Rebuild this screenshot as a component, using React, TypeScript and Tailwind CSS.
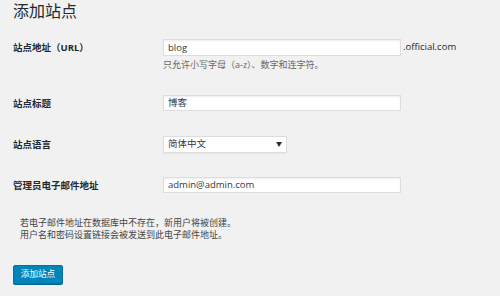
const font = { fontFamily: '"Open Sans", "Noto Sans CJK SC", sans-serif' };

function Label({ children }: { children: React.ReactNode }) {
  return (
    <div className="w-[150px] shrink-0 text-[9.5px] leading-[17px] font-bold text-[#23282d]">
      {children}
    </div>
  );
}

function TextInput({ value }: { value: string }) {
  return (
    <div className="w-[238px] h-[16px] bg-white border border-[#dddddd] shadow-[inset_0_1px_2px_rgba(0,0,0,0.07)] px-[4px] text-[9.5px] leading-[14px] text-[#32373c]">
      {value}
    </div>
  );
}

export default function App() {
  return (
    <div className="w-[500px] h-[296px] bg-[#f1f1f1] px-[13px] overflow-hidden" style={font}>
      <h1 className="text-[16px] leading-[22px] font-normal text-[#23282d]">添加站点</h1>

      <div className="flex mt-[17px]">
        <Label>站点地址（URL）</Label>
        <div>
          <div className="flex items-center">
            <div className="w-[238px] h-[17px] bg-white border border-[#dddddd] shadow-[inset_0_1px_2px_rgba(0,0,0,0.07)] px-[4px] text-[9.5px] leading-[15px] text-[#32373c]">
              blog
            </div>
            <span className="ml-[2px] text-[9.5px] text-[#23282d]">.official.com</span>
          </div>
          <p className="mt-[3px] text-[9px] leading-[12px] text-[#666666]">
            只允许小写字母（a-z）、数字和连字符。
          </p>
        </div>
      </div>

      <div className="flex mt-[24px]">
        <Label>站点标题</Label>
        <TextInput value="博客" />
      </div>

      <div className="flex mt-[24px]">
        <Label>站点语言</Label>
        <div className="w-[124px] h-[17px] bg-white border border-[#dddddd] shadow-[0_1px_1px_rgba(0,0,0,0.04)] px-[4px] flex items-center justify-between text-[9.5px] text-[#32373c]">
          <span>简体中文</span>
          <span className="text-[6px] text-[#23282d]">▼</span>
        </div>
      </div>

      <div className="flex mt-[24px]">
        <Label>管理员电子邮件地址</Label>
        <TextInput value="admin@admin.com" />
      </div>

      <div className="mt-[23px] pl-[7px] text-[9px] leading-[12px] text-[#444444]">
        <p>若电子邮件地址在数据库中不存在，新用户将被创建。</p>
        <p>用户名和密码设置链接会被发送到此电子邮件地址。</p>
      </div>

      <button className="mt-[24px] w-[50px] h-[19px] bg-[#0085ba] border border-[#0073aa] rounded-[2px] shadow-[0_1px_0_#006799] text-white text-[8.6px] leading-[17px]">
        添加站点
      </button>
    </div>
  );
}
